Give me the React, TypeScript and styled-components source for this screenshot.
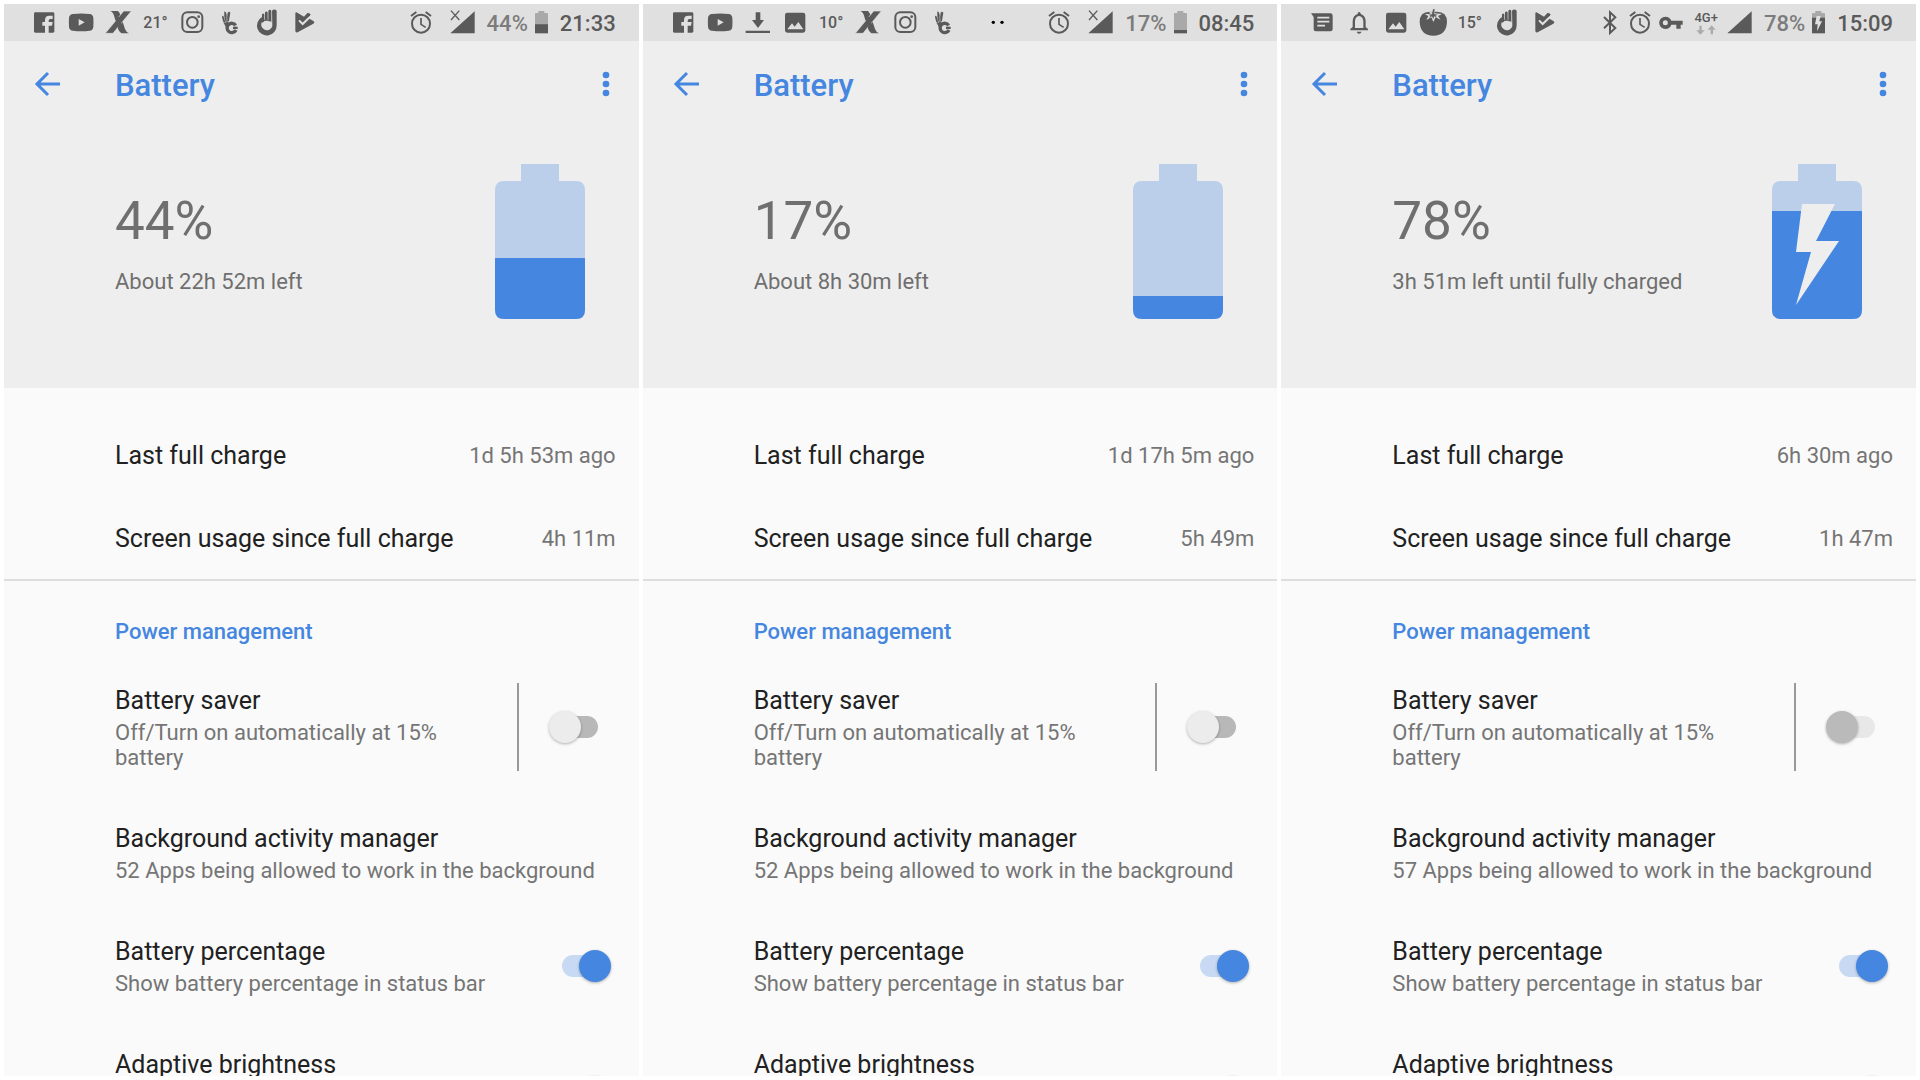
import React from "react";
import styled, { createGlobalStyle } from "styled-components";

const INK = "#5a5a5a";
const BAR = "#e0e0e0";
const BLUE = "#4586e0";
const PALE = "#bbceea";

const GlobalStyle = createGlobalStyle`
  *, *::before, *::after { box-sizing: border-box; }
  body {
    margin: 0;
    background: #fff;
    font-family: Roboto, "Noto Sans", sans-serif;
    color: #212121;
  }
`;

const Page = styled.main`
  display: grid;
  grid-template-columns: repeat(3, 1fr);
  gap: 4px;
  height: 100vh;
  padding: 4px;
`;

const Phone = styled.section`
  display: flex;
  flex-direction: column;
  min-width: 0;
  overflow: hidden;
  background: #fafafa;
  > * { flex-shrink: 0; }
`;

const StatusBar = styled.div`
  display: flex;
  justify-content: space-between;
  height: 37px;
  padding: 0 23px 0 22px;
  background: ${BAR};
  color: ${INK};
`;

const Notifications = styled.div`
  display: flex;
  align-items: center;
`;

const Glyph = styled.svg`
  display: block;
  width: 37px;
  height: 37px;
  flex: none;
`;

const Temperature = styled.span`
  width: 37px;
  font-size: 16px;
  line-height: 20px;
  font-weight: 500;
  text-align: center;
`;

const System = styled.div`
  display: flex;
  align-items: center;
  font-size: 22px;
  line-height: 26px;
  font-weight: 500;
`;

const SystemIcon = styled.svg<{ $w: number; $gap: number }>`
  display: block;
  width: ${(p) => p.$w}px;
  height: 37px;
  margin-right: ${(p) => p.$gap}px;
  flex: none;
`;

const Network = styled.span`
  display: flex;
  flex-direction: column;
  align-items: center;
  margin-right: 9px;
  font-size: 13px;
  line-height: 14px;
`;

const Arrows = styled.svg`
  display: block;
  width: 22px;
  height: 10px;
`;

const Percent = styled.span`
  margin-right: 7px;
  padding-top: 2px;
  color: #7c7c7c;
`;

const Clock = styled.time`
  padding-top: 2px;
`;

const Header = styled.header`
  background: #eee;
`;

const Toolbar = styled.div`
  display: flex;
  align-items: center;
  height: 86px;
  padding: 0 20px 0 21px;
`;

const IconButton = styled.button`
  display: flex;
  align-items: center;
  justify-content: center;
  height: 48px;
  padding: 0;
  border: 0;
  background: none;
  color: ${BLUE};
  cursor: pointer;
`;

const BackButton = styled(IconButton)`
  width: 44px;
  margin-right: 46px;
`;

const MenuButton = styled(IconButton)`
  width: 26px;
  margin-left: auto;
`;

const Title = styled.h1`
  margin: 0;
  padding-top: 4px;
  font-size: 31px;
  line-height: 36px;
  font-weight: 500;
  color: ${BLUE};
`;

const Hero = styled.div`
  display: flex;
  align-items: center;
  justify-content: space-between;
  padding: 37px 54px 69px 111px;
  color: #6f6f6f;
`;

const Summary = styled.div`
  padding-top: 2px;
`;

const Level = styled.div`
  margin-bottom: 17px;
  font-size: 53px;
  line-height: 62px;
`;

const Remaining = styled.div`
  font-size: 22px;
  line-height: 26px;
`;

const Stats = styled.dl`
  margin: 0;
  padding-top: 25px;
  border-bottom: 2px solid #dedede;
`;

const Stat = styled.div`
  display: flex;
  align-items: center;
  justify-content: space-between;
  height: 83px;
  padding: 2px 23px 0 111px;
  dt { font-size: 25px; line-height: 32px; }
  dd { margin: 0; font-size: 22px; line-height: 26px; color: #757575; }
`;

const SectionTitle = styled.h2`
  margin: 0;
  padding: 38px 24px 13px 111px;
  font-size: 22px;
  line-height: 26px;
  font-weight: 500;
  color: ${BLUE};
`;

const Row = styled.div<{ $tall?: boolean }>`
  display: flex;
  align-items: ${(p) => (p.$tall ? "flex-start" : "center")};
  min-height: ${(p) => (p.$tall ? 140 : 0)}px;
  padding: 26px 28px 26px 111px;
`;

const RowText = styled.label`
  display: block;
  flex: 1;
  min-width: 0;
`;

const RowTitle = styled.span`
  display: block;
  margin-bottom: 2px;
  font-size: 25px;
  line-height: 34px;
`;

const RowNote = styled.span`
  display: block;
  font-size: 22px;
  line-height: 25px;
  color: #757575;
`;

const SwitchArea = styled.span<{ $split?: boolean }>`
  display: flex;
  align-items: center;
  align-self: stretch;
  margin: -1px 0 -1px 20px;
  padding-left: 30px;
  border-left: 2px solid ${(p) => (p.$split ? "#999" : "transparent")};
`;

const Switch = styled.input`
  appearance: none;
  position: relative;
  width: 62px;
  height: 32px;
  margin: 0;
  cursor: pointer;
  &::before, &::after { content: ""; position: absolute; }
  &::before {
    left: 13px;
    top: 5px;
    width: 36px;
    height: 22px;
    border-radius: 11px;
    background: #b8b8b8;
  }
  &::after {
    left: 0;
    top: 0;
    width: 32px;
    height: 32px;
    border-radius: 50%;
    background: #ececec;
    box-shadow: 0 1px 3px rgba(0, 0, 0, 0.3);
  }
  &:checked::before { background: #c8daf3; }
  &:checked::after { left: 30px; background: ${BLUE}; }
  &:disabled::before { background: #e8e8e8; }
  &:disabled::after { background: #bababa; }
`;

/* Notification glyphs share a 111-unit square grid. */
const glyphs: Record<string, React.ReactNode> = {
  facebook: (
    <>
      <rect x="24" y="25" width="61" height="61" rx="4" />
      <path d="M57 87V65H49V54H57V48Q57 35 70 35H80V45H73Q68 45 68 50V54H80L78 65H68V87Z" fill={BAR} />
    </>
  ),
  youtube: (
    <>
      <path d="M30 30Q55 27 80 30Q90 31 91 42Q92 55 91 68Q90 79 80 80Q55 83 30 80Q19 79 18 68Q17 55 18 42Q19 31 30 30Z" />
      <path d="M47 45V65L65 55Z" fill={BAR} />
    </>
  ),
  xda: (
    <>
      <path d="M31 21H54Q61 27 63 38L75 75Q78 84 87 88H64Q57 84 53 72L43 38Q40 25 31 21Z" />
      <path d="M71 21H94L39 88H16Z" stroke={BAR} strokeWidth="2" />
      <path d="M46 42L57 38L69 72L57 76Z" />
    </>
  ),
  instagram: (
    <g fill="none" stroke={INK} strokeWidth="6">
      <rect x="25" y="25" width="60" height="59" rx="15" />
      <circle cx="55" cy="55" r="16" />
      <circle cx="74" cy="38" r="4" fill={INK} stroke="none" />
    </g>
  ),
  victory: (
    <>
      <path d="M74 64A14 14 0 1 0 75 78" fill="none" stroke={INK} strokeWidth="10" />
      <path d="M66 68H80V75H66Z" />
      <path d="M33 36Q37 34 39 40L43 55L38 56Q33 45 33 36ZM40 22Q46 23 47 32V58L43 52Q38 34 40 22ZM50 26Q54 20 58 26L54 50L49 56Q47 38 50 26ZM38 57L52 54L54 62L45 70Z" />
    </>
  ),
  ringhand: (
    <>
      <path d="M72 20Q79 13 86 20V64A29.500 29.500 0 1 1 42 39V53A17 17 0 1 0 73 66Z" />
      <path d="M42 31Q46 26 49 31V50H42ZM51 25Q55 20 59 25V50H51ZM61 20Q66 15 70 20V52H61ZM42 47H70V54Q56 44 42 57Z" />
    </>
  ),
  playcheck: (
    <>
      <path d="M31 29Q31 23 37 26L57 38L68 26L76 32L71 43L85 51Q91 55 85 59L38 85Q31 87 31 80Z" />
      <path d="M42 49L53 60L80 34" fill="none" stroke={BAR} strokeWidth="6" />
      <path d="M66 32L71 26L77 32L71 38Z" />
    </>
  ),
  download: <path d="M50 25H64V48H75L57 72L39 48H50ZM20 80H93V87H20Z" />,
  image: (
    <>
      <rect x="27" y="26" width="61" height="60" rx="7" />
      <path d="M34 76L48 58L56 68L67 54L82 76Z" fill={BAR} />
    </>
  ),
  message: (
    <>
      <path d="M24 28H82Q89 28 89 35V75Q89 82 82 82H38Q32 82 32 75V39Z" />
      <path d="M43 41H79M43 53H79M43 65H66" stroke={BAR} strokeWidth="5" />
    </>
  ),
  bell: (
    <>
      <path d="M31 79V75L38 69V51Q39 35 53 30V28Q57 20 62 28V30Q76 35 77 51V69L84 75V79ZM45 72H70V51Q69 37 57 36Q46 37 45 51Z" fillRule="evenodd" />
      <path d="M50 83H65Q62 89 57 89Q52 89 50 83Z" />
    </>
  ),
  tomato: (
    <>
      <path d="M58 24Q99 18 99 54Q97 95 58 95Q19 95 17 54Q17 18 58 24Z" />
      <path d="M55 16L62 17L61 28L84 30L72 36L80 47L65 40L58 54L52 40L37 48L43 36L32 31L50 29L42 20L56 26Z" fill={BAR} />
      <path d="M57 16L62 15L60 30L72 32L64 35L70 41L60 37L58 46L54 37L45 42L50 35L43 32L54 31Z" />
    </>
  ),
};

const alarm = (
  <SystemIcon $w={22} $gap={0} viewBox="0 12 66 111" aria-label="Alarm">
    <g fill="none" stroke={INK}>
      <circle cx="33" cy="71" r="27" strokeWidth="6" />
      <path d="M33 54V73L47 82" strokeWidth="5" />
      <path d="M3 48L19 36M63 48L47 36" strokeWidth="6" />
    </g>
  </SystemIcon>
);

const Spacer = styled.span<{ $w: number }>`
  width: ${(p) => p.$w}px;
`;

interface PhoneData {
  id: string;
  icons: string[];
  level: number;
  left: string;
  clock: string;
  fillTop: number;
  smallTop: number;
  charging?: boolean;
  noSim?: boolean;
  dots?: boolean;
  lastCharge: string;
  usage: string;
  apps: number;
}

const phones: PhoneData[] = [
  {
    id: "a",
    icons: ["facebook", "youtube", "xda", "21°", "instagram", "victory", "ringhand", "playcheck"],
    level: 44, left: "About 22h 52m left", clock: "21:33", fillTop: 94, smallTop: 73, noSim: true,
    lastCharge: "1d 5h 53m ago", usage: "4h 11m", apps: 52,
  },
  {
    id: "b",
    icons: ["facebook", "youtube", "download", "image", "10°", "xda", "instagram", "victory"],
    level: 17, left: "About 8h 30m left", clock: "08:45", fillTop: 132, smallTop: 90, noSim: true, dots: true,
    lastCharge: "1d 17h 5m ago", usage: "5h 49m", apps: 52,
  },
  {
    id: "c",
    icons: ["message", "bell", "image", "tomato", "15°", "ringhand", "playcheck"],
    level: 78, left: "3h 51m left until fully charged", clock: "15:09", fillTop: 47, smallTop: 53, charging: true,
    lastCharge: "6h 30m ago", usage: "1h 47m", apps: 57,
  },
];

function Status({ data }: { data: PhoneData }) {
  return (
    <StatusBar>
      <Notifications>
        {data.icons.map((name) =>
          glyphs[name] ? (
            <Glyph key={name} viewBox="0 0 111 111" fill={INK} aria-label={name}>{glyphs[name]}</Glyph>
          ) : (
            <Temperature key={name}>{name}</Temperature>
          )
        )}
        {data.dots && (
          <>
            <Spacer $w={18} />
            <Glyph viewBox="0 0 111 111" fill="#000" aria-label="More notifications">
              <circle cx="43" cy="55" r="5" />
              <circle cx="69" cy="55" r="5" />
            </Glyph>
          </>
        )}
      </Notifications>
      <System>
        {data.charging && (
          <SystemIcon $w={14} $gap={12} viewBox="0 12 42 111" aria-label="Bluetooth">
            <path d="M3 51L37 84L21 99V37L37 52L3 85" fill="none" stroke={INK} strokeWidth="6" />
          </SystemIcon>
        )}
        {alarm}
        {data.charging && (
          <>
            <Spacer $w={8} />
            <SystemIcon $w={24} $gap={11} viewBox="0 12 72 111" fill={INK} aria-label="VPN key">
              <path
                d="M19 50Q32 50 37 62H71V74H65V86H52V74H37Q32 87 19 87A18.500 18.500 0 1 1 19 50ZM19 61A7.500 7.500 0 1 0 19 76A7.500 7.500 0 1 0 19 61Z"
                fillRule="evenodd"
              />
            </SystemIcon>
            <Network>
              4G+
              <Arrows viewBox="0 0 66 30" fill="#ababab">
                <path d="M13 2H20V16H29L16 29L4 16H13ZM47 28H54V14H62L50 1L38 14H47Z" />
              </Arrows>
            </Network>
          </>
        )}
        {data.noSim && <Spacer $w={18} />}
        <SystemIcon $w={25} $gap={12} viewBox="0 12 75 111" aria-label="Mobile signal">
          <path d="M74 34V100H1Z" fill={INK} />
          {data.noSim && <path d="M3 32L28 60M28 32L3 60" stroke={INK} strokeWidth="4" />}
        </SystemIcon>
        <Percent>{data.level}%</Percent>
        <SystemIcon $w={13} $gap={12} viewBox="0 12 39 111" aria-label="Battery level">
          <path d="M10 33H28V39H37Q39 39 39 41V98Q39 100 37 100H2Q0 100 0 98V41Q0 39 2 39H10Z" fill="#a9a9a9" />
          <path d={`M0 ${data.smallTop}H39V98Q39 100 37 100H2Q0 100 0 98Z`} fill={INK} />
          {data.charging && <path d="M14 48H26L22 64H30L15 94L17 73H9Z" fill={BAR} />}
        </SystemIcon>
        <Clock>{data.clock}</Clock>
      </System>
    </StatusBar>
  );
}

function BigBattery({ data }: { data: PhoneData }) {
  const clip = `shell-${data.id}`;
  return (
    <svg width="90" height="155" viewBox="0 0 90 155" role="img" aria-label={`Battery at ${data.level}%`}>
      <clipPath id={clip}>
        <path d="M26 0H64V17H81Q90 17 90 26V146Q90 155 81 155H9Q0 155 0 146V26Q0 17 9 17H26Z" />
      </clipPath>
      <g clipPath={`url(#${clip})`}>
        <rect width="90" height="155" fill={PALE} />
        <rect y={data.fillTop} width="90" height={155 - data.fillTop} fill={BLUE} />
      </g>
      {data.charging && <path d="M30 40H63L44 77H67L24 141L39 88H24Z" fill="#eee" />}
    </svg>
  );
}

function SwitchRow(props: {
  id: string; title: string; note?: string; checked?: boolean; disabled?: boolean; split?: boolean;
}) {
  return (
    <Row $tall={!props.note}>
      <RowText htmlFor={props.id}>
        <RowTitle>{props.title}</RowTitle>
        {props.note && <RowNote>{props.note}</RowNote>}
      </RowText>
      <SwitchArea $split={props.split}>
        <Switch type="checkbox" role="switch" id={props.id} defaultChecked={props.checked} disabled={props.disabled} />
      </SwitchArea>
    </Row>
  );
}

export default function App() {
  return (
    <>
      <GlobalStyle />
      <Page>
        {phones.map((p) => (
          <Phone key={p.id}>
            <Status data={p} />
            <Header>
              <Toolbar>
                <BackButton type="button" aria-label="Back">
                  <svg width="26" height="26" viewBox="0 0 26 26" fill="none" stroke="currentColor" strokeWidth="3">
                    <path d="M14 2L3 13L14 24M3 13H26" />
                  </svg>
                </BackButton>
                <Title>Battery</Title>
                <MenuButton type="button" aria-label="More options">
                  <svg width="8" height="26" viewBox="0 0 8 26" fill="currentColor">
                    <circle cx="4" cy="4" r="3.300" />
                    <circle cx="4" cy="13" r="3.300" />
                    <circle cx="4" cy="22" r="3.300" />
                  </svg>
                </MenuButton>
              </Toolbar>
              <Hero>
                <Summary>
                  <Level>{p.level}%</Level>
                  <Remaining>{p.left}</Remaining>
                </Summary>
                <BigBattery data={p} />
              </Hero>
            </Header>
            <Stats>
              <Stat><dt>Last full charge</dt><dd>{p.lastCharge}</dd></Stat>
              <Stat><dt>Screen usage since full charge</dt><dd>{p.usage}</dd></Stat>
            </Stats>
            <SectionTitle>Power management</SectionTitle>
            <SwitchRow id={`saver-${p.id}`} title="Battery saver" note="Off/Turn on automatically at 15% battery" disabled={p.charging} split />
            <Row>
              <div>
                <RowTitle>Background activity manager</RowTitle>
                <RowNote>{p.apps} Apps being allowed to work in the background</RowNote>
              </div>
            </Row>
            <SwitchRow id={`percent-${p.id}`} title="Battery percentage" note="Show battery percentage in status bar" checked />
            <SwitchRow id={`bright-${p.id}`} title="Adaptive brightness" checked />
          </Phone>
        ))}
      </Page>
    </>
  );
}
